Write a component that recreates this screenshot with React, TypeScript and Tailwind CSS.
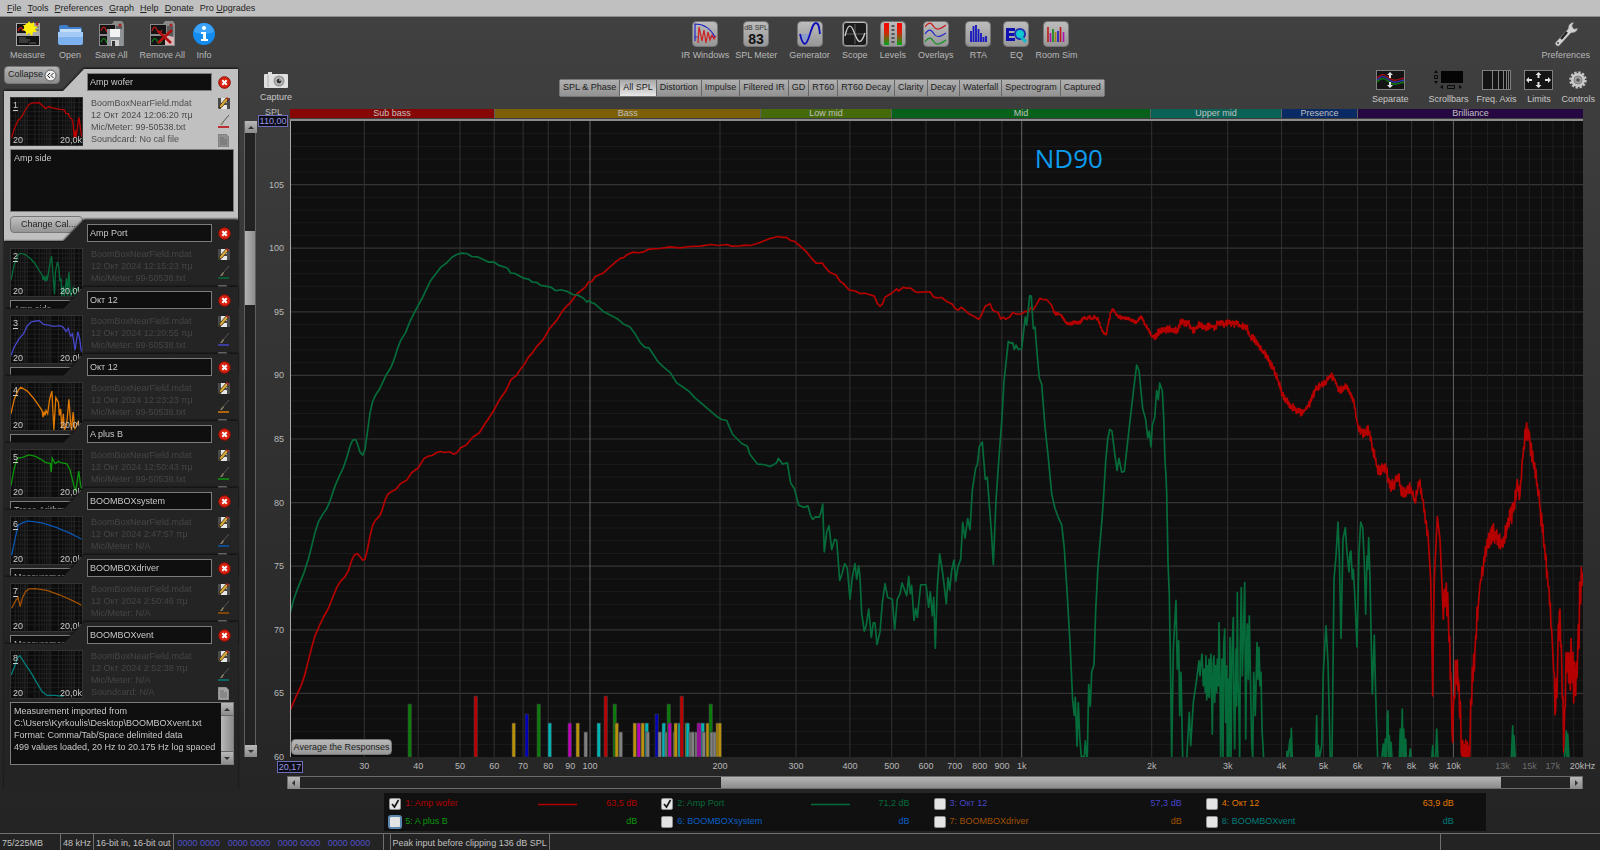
import { useState } from "react";
import type { ReactNode } from "react";

type Point = [number, number];

/* ---------- chart geometry ---------- */

const PLOT = { x: 290, y: 121, w: 1293, h: 637 };
const DECADE = 431.7;

const freqX = (hz: number) => 300 + DECADE * Math.log10(hz / 100);
const splY = (db: number) => ((110 - db) / 50) * PLOT.h;

const frequencyLabels = [
  { hz: 30, text: "30" },
  { hz: 40, text: "40" },
  { hz: 50, text: "50" },
  { hz: 60, text: "60" },
  { hz: 70, text: "70" },
  { hz: 80, text: "80" },
  { hz: 90, text: "90" },
  { hz: 100, text: "100" },
  { hz: 200, text: "200" },
  { hz: 300, text: "300" },
  { hz: 400, text: "400" },
  { hz: 500, text: "500" },
  { hz: 600, text: "600" },
  { hz: 700, text: "700" },
  { hz: 800, text: "800" },
  { hz: 900, text: "900" },
  { hz: 1000, text: "1k" },
  { hz: 2000, text: "2k" },
  { hz: 3000, text: "3k" },
  { hz: 4000, text: "4k" },
  { hz: 5000, text: "5k" },
  { hz: 6000, text: "6k" },
  { hz: 7000, text: "7k" },
  { hz: 8000, text: "8k" },
  { hz: 9000, text: "9k" },
  { hz: 10000, text: "10k" },
  { hz: 13000, text: "13k", dim: true },
  { hz: 15000, text: "15k", dim: true },
  { hz: 17000, text: "17k", dim: true },
  { hz: 19900, text: "20kHz" },
];

const faintFrequencies = [11000, 12000, 13000, 14000, 15000, 16000, 17000, 18000, 19000];

const bands = [
  { name: "Sub bass", size: 205, color: "bg-[#870606]" },
  { name: "Bass", size: 267, color: "bg-[#7d5f08]" },
  { name: "Low mid", size: 130, color: "bg-[#466a0a]" },
  { name: "Mid", size: 260, color: "bg-[#07611a]" },
  { name: "Upper mid", size: 130, color: "bg-[#0a6156]" },
  { name: "Presence", size: 76, color: "bg-[#0a2a63]" },
  { name: "Brilliance", size: 226, color: "bg-[#250842]" },
];

/* Each trace is stored as sections: origin, vertical step, jitter and points. */
interface Section {
  ox: number;
  oy: number;
  sy: number;
  jitter: number;
  data: string;
}

const LOW = { ox: 280, oy: 220, sy: 3 };
const MID = { ox: 740, oy: 200, sy: 2.75 };
const HIGH = { ox: 1150, oy: 280, sy: 3 };

const wooferTrace: Section[] = [
  {
    ...LOW,
    jitter: 0,
    data: "30,1475 50,1428 65,1395 75,1365 85,1325 95,1285 105,1250 117,1222 130,1195 145,1168 158,1135 170,1105 180,1088 195,1072 205,1055 215,1023 223,1007 232,1003 240,1012 248,1023 255,1020 262,992 270,950 278,918 286,903 300,888 307,870 315,843 323,825 332,818 347,810 362,792 380,782 395,760 415,745 433,716 445,710 457,708 470,699 480,696 495,699 508,697 522,704 530,700 542,685 558,677 578,653 598,640 615,613 640,575 657,543 678,513 693,480 710,467 722,448 733,434 745,413 757,400 768,383 790,359 810,325 830,302 847,275 860,259 872,248 890,223 915,203 926,187 935,186 946,170 970,160 985,146 1010,124 1022,115 1030,114 1042,104 1060,97 1077,99 1092,96 1107,88 1140,86 1170,81 1200,84 1230,80 1260,79 1293,74 1315,77 1340,74 1355,79 1380,78 1395,76 1412,77 1440,68 1470,56",
  },
  {
    ...MID,
    jitter: 0,
    data: "115,101 125,103 140,103 150,111 165,115 175,123 198,142 213,159 228,174 247,174 254,184 270,200 288,207 300,224 310,230 327,248 345,251 360,258 375,257 403,265 412,285 420,293 427,287 435,268 455,257 470,245 475,251 490,241 500,243 512,243 525,253 535,255 545,254 570,253 580,267 592,270 605,269 620,280 637,287 643,297 655,304 663,296 675,304 685,313 700,320 716,329 722,322 735,294 750,286 758,304 775,311 782,328 790,323 797,329 810,322 818,310 830,315 845,314 857,306 865,309 872,297 880,303 890,287 900,271 910,275 920,275 935,290",
  },
  {
    ...MID,
    jitter: 5,
    data: "943,312 957,315 965,318 975,335 987,343 1000,338 1020,339 1030,325 1040,328 1047,320 1055,328 1065,322 1075,330 1080,345 1087,362 1098,372 1105,342 1112,310 1118,300 1130,318 1145,325 1160,325 1175,332 1190,338 1200,325 1205,322 1215,345 1225,355 1235,376 1247,381 1255,366 1270,357 1288,355",
  },
  {
    ...HIGH,
    jitter: 11,
    data: "12,170 30,155 45,150 60,147 75,153 85,148 93,122 105,130 115,130 125,148 135,150 145,136 165,142 185,140 195,142 207,126 220,135 235,125 245,133 260,130 270,138 290,142 300,170 315,180 330,205 350,228 370,268 385,305 397,345 410,365 425,382 440,392 455,400 465,390 480,373 497,328 510,317 520,316 530,303 543,289 555,300 567,335 580,325 590,317 600,345 612,365 620,420",
  },
  {
    ...HIGH,
    jitter: 20,
    data: "627,455 640,455 655,457 665,490 680,560 688,580 697,565 707,558 715,605 725,620 735,608 745,592 752,630 760,645 775,620 785,638 795,670 803,630 808,610 818,660 827,730 835,780",
  },
  { ...HIGH, jitter: 0, data: "842,900 845,1060 848,1250 850,1080 853,900 862,712 870,780 876,915 880,1020" },
  {
    ...HIGH,
    jitter: 55,
    data: "883,930 887,940 895,1010 902,1180 908,1390 912,1250 918,1150 925,1200 932,1320 936,1430 943,1450 950,1420 958,1450 963,1260 975,1110 984,990",
  },
  {
    ...HIGH,
    jitter: 30,
    data: "990,915 1000,870 1010,800 1020,770 1032,760 1045,778 1060,795 1075,725 1088,700 1100,620 1110,645 1117,540 1128,450 1140,490 1150,550 1165,640 1180,770 1195,920 1205,1050",
  },
  {
    ...HIGH,
    jitter: 90,
    data: "1211,1180 1217,1290 1223,1140 1228,1000 1235,1150 1242,1370 1250,1150 1257,1190 1265,1150 1275,1240 1283,1120 1290,960 1298,880",
  },
];

const portTrace: Section[] = [
  {
    ...LOW,
    jitter: 0,
    data: "30,1183 40,1145 50,1115 60,1090 72,1060 85,1020 95,980 105,940 115,908 128,885 140,868 150,845 165,800 178,770 190,745 200,715 210,680 218,662 227,660 233,675 240,698 248,707 255,690 262,640 270,580 278,545 286,528 298,510 318,467 333,443 343,418 353,385 362,362 377,338 390,305 405,275 425,238 452,182 483,142 500,129 515,113 530,104 545,100 560,101 575,110 592,111 610,119 625,127 640,126 655,136 682,145 692,160 705,161 730,175 745,178 757,187 770,188 782,197 812,202 827,213 842,210 862,215 880,225 890,225 910,235 920,247 928,242 935,249 943,251 970,275 1012,297 1030,313 1050,322 1065,342 1080,368 1095,383 1107,385 1133,425 1150,442 1170,458 1190,490 1210,503 1228,516 1245,535 1270,556 1312,592 1325,600 1340,603 1348,622 1358,645 1385,672 1402,680 1410,705 1433,734 1455,736 1470,741 1480,736 1490,730",
  },
  {
    ...MID,
    jitter: 0,
    data: "115,712 128,728 142,724 152,780 163,795 176,841 192,847 204,843 212,870 218,880 226,873 238,874 243,860 248,838 253,970 260,915 267,898 275,963 284,935 290,938 299,1048 306,1030 314,1002 322,1015 330,1100 337,1040 345,1002 350,1045 356,1008 360,1040 365,1140 373,1188 378,1175 386,1127 394,1205 400,1165 405,1165 411,1225 420,1190 427,1110 435,1057 443,1095 457,1100 464,1183 472,1100 480,1085 486,1055 500,1090 506,1037 511,1085 515,1062 522,1158 527,1125 532,1150 542,1060 558,1060 566,1122 571,1080 577,1145 581,1095 586,1235 592,1065 599,975 609,1035 619,1113 624,1040 629,1075 635,1020 642,992 647,1050 654,1010 662,990 668,888 675,932 683,878 690,908 697,800 707,738 712,730 718,680 727,667 736,770 742,764 748,840 754,910 760,1005 768,830 776,720 785,610 792,500 805,390 813,395 818,393 823,412 828,400 835,412 845,410 856,322 860,345 869,264 874,265 880,355 885,350 892,430 898,490 905,508 915,625 925,710 935,810 945,850 955,875 965,895 973,960 982,1090 990,1220 998,1380 1003,1420 1006,1370 1011,1505 1015,1385 1019,1480 1024,1533 1033,1533 1036,1490 1040,1533 1042,1533 1046,1335 1051,1395 1055,1300 1062,1280 1067,1130 1074,1010 1086,880 1090,830 1097,720 1103,660 1109,632 1116,637 1123,690 1131,745 1137,712 1145,750 1153,748 1160,690 1168,625 1180,530 1190,455 1197,470 1208,575 1217,605 1223,655 1228,637 1233,680 1237,620 1244,600 1250,525 1255,550 1259,505 1267,525 1271,600 1275,720 1278,760",
  },
  {
    ...HIGH,
    jitter: 0,
    data: "50,640 54,850 58,945 62,1200 65,1440 70,1110 78,963 82,1170 86,1085 89,1310 93,1180 98,1440 110,1440 118,1300 122,1400 130,1270 140,1200 147,1145 150,1190 153,1150 156,1125 160,1220 163,1170 166,1240 168,1130 170,1262 173,1160 175,1250 177,1140 178,1255 181,1190 183,1125 187,1365 190,1150 192,1130 194,1270 197,1160 200,1240 202,1140 205,1220 207,1030 210,1200 212,1440 216,1140 219,1440 221,1100 224,1050 227,1330 230,1160 232,1440 235,1200 237,1440 240,1075 243,1440 246,1120 250,1015 252,1300 254,1410 258,1110 260,1280 262,940 264,1210 266,1250 269,1440 271,1100 274,925 277,1190 280,1080 284,910 287,1380 290,1100 292,1035 295,1200 298,1010 302,1240 305,1390 308,1440 311,1180 314,1250 316,1310 321,1090 324,1200 327,1105 330,1220 333,1180 336,1350 341,1440 410,1440 411,1417 413,1440 420,1380 422,1440 424,1348 427,1440 497,1440 500,1310 502,1440 505,1400 508,1440 515,1400 520,1180 528,1040 534,1150 541,1440 546,1440 552,900 558,830 564,728 568,830 573,1078 579,780 586,745 591,820 594,850 597,878 600,820 603,815 607,900 610,870 615,960 621,1103 627,820 632,728 638,745 643,850 647,1005 651,830 653,870 656,775 660,900 667,1245 673,1068 677,1250 683,1440 695,1440 700,1395 703,1440 706,1380 709,1440 712,1310 714,1295 716,1440 718,1370 721,1440 723,1390 726,1440 748,1440 751,1350 753,1440 757,1290 759,1440 761,1350 764,1440 767,1380 769,1440 778,1440 781,1410 784,1440 845,1440 848,1400 851,1440 857,1440 860,1350 864,1440 1084,1440 1088,1340 1090,1440 1092,1370 1096,1440 1243,1440 1247,1400 1249,1355 1251,1440 1253,1365 1257,1440",
  },
];

// small repeatable hash, so the ripple is the same on every draw
const hash = (n: number) => {
  const s = Math.sin(n * 127.1 + 11.7) * 43758.5453;
  return s - Math.floor(s);
};

function tracePoints(sections: Section[]) {
  const out: string[] = [];
  let side = 1;
  sections.forEach(({ ox, oy, sy, jitter, data }) => {
    const pts = data.split(" ").map((p) => p.split(",").map(Number) as Point);
    const place = (x: number, y: number) =>
      out.push(`${(ox + x / 3 - PLOT.x).toFixed(1)},${(oy + y / sy - PLOT.y).toFixed(1)}`);
    pts.forEach(([x, y], i) => {
      place(x, y);
      const next = pts[i + 1];
      if (!jitter || !next) return;
      for (let px = x + 2; px < next[0]; px += 2) {
        const t = (px - x) / (next[0] - x);
        side = -side;
        place(px, y + (next[1] - y) * t + side * (0.1 + 0.9 * hash(px)) * jitter);
      }
    });
  });
  return out.join(" ");
}

const modeColors = {
  red: { fill: "#b80000", top: 576 },
  green: { fill: "#0b7d0b", top: 584 },
  blue: { fill: "#0000b4", top: 594 },
  yellow: { fill: "#b8900a", top: 603 },
  cyan: { fill: "#00b4b4", top: 603 },
  magenta: { fill: "#b800b8", top: 603 },
  grey: { fill: "#808080", top: 612 },
};

const roomModes: [keyof typeof modeColors, number][] = [
  ["green", 120], ["red", 186], ["yellow", 224], ["blue", 237], ["green", 249], ["cyan", 260],
  ["magenta", 280], ["yellow", 288], ["grey", 296], ["cyan", 309], ["red", 316], ["green", 325],
  ["yellow", 327], ["grey", 331], ["yellow", 345], ["magenta", 349], ["yellow", 353],
  ["cyan", 357], ["grey", 358], ["blue", 367], ["grey", 370], ["cyan", 374], ["grey", 377],
  ["green", 379], ["magenta", 380], ["grey", 385], ["yellow", 386], ["cyan", 390], ["red", 392],
  ["yellow", 397], ["cyan", 398], ["grey", 401], ["grey", 403], ["grey", 407], ["magenta", 409],
  ["magenta", 411], ["cyan", 413], ["grey", 414], ["yellow", 418], ["green", 421], ["grey", 422],
  ["grey", 425], ["yellow", 428], ["yellow", 430],
];

/* ---------- measurements ---------- */

interface Measurement {
  id: number;
  name: string;
  time: string;
  mic: string;
  notes: string;
  color: string;
  curve: string;
}

const measurements: Measurement[] = [
  {
    id: 1, name: "Amp wofer", time: "12 Окт 2024 12:06:20 πμ", mic: "99-50538.txt", notes: "Amp side", color: "#b80000",
    curve: "2,122 10,95 22,68 32,60 42,40 55,20 65,16 85,14 95,22 105,32 115,27 130,31 150,35 162,36 168,48 175,48 180,60 186,65 190,80 193,122 197,100 199,122 205,75 208,60 213,100 216,120",
  },
  {
    id: 2, name: "Amp Port", time: "12 Окт 2024 12:15:23 πμ", mic: "99-50538.txt", notes: "Amp side", color: "#066b3a",
    curve: "0,95 10,48 22,18 30,13 45,18 60,30 75,47 85,65 95,80 98,95 101,85 105,100 108,82 110,98 115,70 120,40 124,22 127,60 133,140 136,70 142,40 146,55 150,100 153,90 155,145 160,115 163,145 170,90 173,145 177,70 182,145 190,120 195,145 205,118 208,145",
  },
  {
    id: 3, name: "Окт 12", time: "12 Окт 2024 12:20:55 πμ", mic: "99-50538.txt", notes: "", color: "#4646c8",
    curve: "0,122 10,95 25,70 38,55 50,30 62,18 85,14 100,26 115,28 130,32 150,30 160,35 168,48 175,38 182,62 188,55 196,105 204,48 210,70 215,110",
  },
  {
    id: 4, name: "Окт 12", time: "12 Окт 2024 12:23:23 πμ", mic: "99-50538.txt", notes: "", color: "#e07800",
    curve: "0,95 10,50 22,22 30,13 50,25 70,48 85,70 95,85 98,105 101,88 104,100 107,85 112,95 118,50 125,25 131,145 137,45 145,60 148,100 152,80 155,140 160,95 163,145 170,130 177,50 182,120 185,145 190,90 195,145 205,120 210,145",
  },
  {
    id: 5, name: "A plus B", time: "12 Окт 2024 12:50:43 πμ", mic: "99-50538.txt", notes: "Trace Arithmetic", color: "#0b960b",
    curve: "0,110 10,55 20,25 35,23 55,15 75,20 90,28 105,38 120,42 123,68 126,25 135,42 145,35 155,40 170,42 180,60 185,80 192,110 198,125 207,65 213,110 216,120",
  },
  {
    id: 6, name: "BOOMBOXsystem", time: "12 Окт 2024 2:47:57 πμ", mic: "N/A", notes: "Measurement", color: "#0a55b0",
    curve: "2,118 12,70 22,25 35,18 50,13 70,14 100,20 140,33 180,50 215,68",
  },
  {
    id: 7, name: "BOOMBOXdriver", time: "12 Окт 2024 2:50:46 πμ", mic: "N/A", notes: "Measurement", color: "#a05000",
    curve: "2,75 15,50 22,42 28,70 35,42 45,22 55,15 75,14 110,20 150,34 190,52 215,65",
  },
  {
    id: 8, name: "BOOMBOXvent", time: "12 Окт 2024 2:52:38 πμ", mic: "N/A",
    notes: "Measurement imported from\nC:\\Users\\Kyrkoulis\\Desktop\\BOOMBOXvent.txt\nFormat: Comma/Tab/Space delimited data\n499 values loaded, 20 Hz to 20.175 Hz log spaced",
    color: "#007d78",
    curve: "0,75 10,50 20,22 27,14 40,35 60,65 80,100 95,125 110,137 135,137 160,140",
  },
];

const legend = [
  { id: 1, label: "1: Amp wofer", value: "63,5 dB", checked: true, text: "text-[#b00000]", line: "#b00000" },
  { id: 2, label: "2: Amp Port", value: "71,2 dB", checked: true, text: "text-[#066b3a]", line: "#066b3a" },
  { id: 3, label: "3: Окт 12", value: "57,3 dB", checked: false, text: "text-[#4646c8]" },
  { id: 4, label: "4: Окт 12", value: "63,9 dB", checked: false, text: "text-[#e07800]" },
  { id: 5, label: "5: A plus B", value: "dB", checked: false, text: "text-[#0b960b]", focus: true },
  { id: 6, label: "6: BOOMBOXsystem", value: "dB", checked: false, text: "text-[#0a5fc4]" },
  { id: 7, label: "7: BOOMBOXdriver", value: "dB", checked: false, text: "text-[#a05000]" },
  { id: 8, label: "8: BOOMBOXvent", value: "dB", checked: false, text: "text-[#007d78]" },
];

const graphTabs = [
  "SPL & Phase", "All SPL", "Distortion", "Impulse", "Filtered IR", "GD", "RT60",
  "RT60 Decay", "Clarity", "Decay", "Waterfall", "Spectrogram", "Captured",
];

const menus = [
  ["", "F", "ile"],
  ["", "T", "ools"],
  ["", "P", "references"],
  ["", "G", "raph"],
  ["", "H", "elp"],
  ["", "D", "onate"],
  ["Pro ", "U", "pgrades"],
];

/* ---------- icons ---------- */

function FilesIcon({ children }: { children?: ReactNode }) {
  return (
    <svg width="26" height="26" viewBox="0 0 26 26">
      <path d="M1 3h13l2-3h8l2 3v22H1z" fill="#8a8a8a" />
      <path d="M2 4h15v9H2zM2 15h15v9H2z" fill="#141414" />
      <path d="M3 10c2-6 4-4 5-1s3 4 5 0" fill="none" stroke="#c01818" strokeWidth="1.2" />
      <path d="M3 21c2-5 4-4 5-1s3 3 5 0" fill="none" stroke="#108a20" strokeWidth="1.2" />
      <path d="M18 5h6v19h-6z" fill="#5a5a5a" />
      <circle cx="22" cy="4" r="1.5" fill="#b02020" />
      {children}
    </svg>
  );
}

const MeasureIcon = () => (
  <svg width="26" height="26" viewBox="0 0 26 26">
    <path d="M1 2h24v23H1z" fill="#a8a8a8" />
    <path d="M2 3h15v9H2zM2 15h22v9H2z" fill="#141414" />
    <path d="M3 10c2-5 4-4 5 0" fill="none" stroke="#c01818" strokeWidth="1.2" />
    <path d="M4 17h7M4 19h11M4 21h9M14 22h7" stroke="#777" strokeWidth="0.8" />
    <path d="M19 6h5M19 9h5" stroke="#555" />
    <circle cx="22" cy="3" r="1.5" fill="#b02020" />
    <path d="M14 0l2 3 3-2 0 4 4 1-3 2 2 3-4 0-1 4-3-3-3 2 0-4-4-1 3-2-2-3 4 0z" fill="#fff000" />
    <circle cx="14" cy="7" r="5" fill="#ffee10" />
  </svg>
);

const OpenIcon = () => (
  <svg width="26" height="26" viewBox="0 0 26 26">
    <path d="M2 6q0-2 2-2h6l2 2h11q2 0 2 2v5H2z" fill="#3f7ecb" />
    <path d="M3 8h21v5H3z" fill="#c3dcf8" />
    <path d="M1 11h25v11q0 2-2 2H3q-2 0-2-2z" fill="#7db1ee" />
    <path d="M1 11h25v5H1z" fill="#a3caf7" />
  </svg>
);

const SaveAllIcon = () => (
  <FilesIcon>
    <path d="M9 8h15l1 1v16H9z" fill="#8f9296" />
    <path d="M12 8h10v8H12z" fill="#f2f2f2" />
    <path d="M13 19h8v6h-8z" fill="#d0d0d0" />
    <path d="M14 20h3v5h-3z" fill="#333" />
  </FilesIcon>
);

const RemoveAllIcon = () => (
  <FilesIcon>
    <path d="M16 14l9 2v8h-9z" fill="#d8b8b8" />
    <path d="M9 10l13 12M23 9L9 22" stroke="#b01010" strokeWidth="2.6" />
  </FilesIcon>
);

const InfoIcon = () => (
  <svg width="26" height="26" viewBox="0 0 26 26">
    <circle cx="13" cy="13" r="11" fill="#148cf0" />
    <path d="M3 11a10 9 0 0 1 20 0q-10 4-20 0" fill="#3ba2f7" />
    <circle cx="13" cy="7" r="2" fill="#fff" />
    <path d="M10 11h5v7h2v2h-7v-2h2v-5h-2z" fill="#fff" />
  </svg>
);

function Tile({ dark, children }: { dark?: boolean; children: ReactNode }) {
  return (
    <svg width="26" height="26" viewBox="0 0 26 26">
      <defs>
        <linearGradient id="tile" x1="0" y1="0" x2="0" y2="1">
          <stop offset="0" stopColor="#bdbdbd" />
          <stop offset="1" stopColor="#969696" />
        </linearGradient>
      </defs>
      <rect x="0.5" y="0.5" width="25" height="25" rx="4" fill="url(#tile)" stroke="#777" />
      {dark && <rect x="2" y="2" width="22" height="22" rx="2" fill="#1c1c1c" />}
      {children}
    </svg>
  );
}

const IrWindowsIcon = () => (
  <Tile>
    <path d="M3 20V3q13 0 20 13" fill="none" stroke="#2424c8" strokeWidth="1.2" />
    <path d="M3 16h3M18 16h5" stroke="#2424c8" strokeWidth="0.8" />
    <path d="M6 22l1-16 3 14 2-11 2 13 2-11 2 8 2-5 2 4 2-3" fill="none" stroke="#d02020" strokeWidth="1.2" />
  </Tile>
);

const SplMeterIcon = () => (
  <Tile>
    <text x="13" y="9" textAnchor="middle" fontSize="7" fontFamily="Liberation Sans, sans-serif" fill="#333">dB SPL</text>
    <text x="13" y="23" textAnchor="middle" fontSize="14" fontWeight="bold" fontFamily="Liberation Sans, sans-serif" fill="#111">83</text>
  </Tile>
);

const GeneratorIcon = () => (
  <Tile>
    <path d="M3 13h11q-3 9-5 9t-6-9" fill="#8c9cc8" />
    <path d="M3 13C6 26 9 25 12 16s4-14 7-14 3 4 4 11" fill="none" stroke="#1010b8" strokeWidth="1.8" />
  </Tile>
);

const ScopeIcon = () => (
  <Tile dark>
    <path d="M3 13h20M13 3v20" stroke="#606060" />
    <path d="M3 15C6 2 9 3 12 11s6 16 11 1" fill="none" stroke="#c8c8c8" strokeWidth="1.4" />
  </Tile>
);

const LevelsIcon = () => (
  <Tile>
    <defs>
      <linearGradient id="level" x1="0" y1="0" x2="0" y2="1">
        <stop offset="0" stopColor="#ff0000" />
        <stop offset="0.45" stopColor="#d02808" />
        <stop offset="1" stopColor="#00a818" />
      </linearGradient>
    </defs>
    <path d="M4 2h5v22H4zM17 2h5v22h-5z" fill="url(#level)" />
    <path d="M13 4v20" stroke="#555" strokeWidth="3" strokeDasharray="2 2" />
  </Tile>
);

const OverlaysIcon = () => (
  <Tile>
    <path d="M2 6c5-7 7-3 9 0s5 3 12-2" fill="none" stroke="#c82020" strokeWidth="1.2" />
    <path d="M2 13c5-7 7-3 9 0s5 4 12-1" fill="none" stroke="#2828c8" strokeWidth="1.2" />
    <path d="M2 21c5-7 7-3 9 0s5 3 12-2" fill="none" stroke="#189020" strokeWidth="1.2" />
  </Tile>
);

const RtaIcon = () => (
  <Tile>
    <path d="M6 21V10M8.500 21V5M11 21V4M13.500 21V8M16 21v-9M18.500 21v-5M21 21v-6" stroke="#1414c0" strokeWidth="1.8" />
  </Tile>
);

const EqIcon = () => (
  <Tile>
    <path d="M3 7h9v3H6v2h5v3H6v2h6v3H3z" fill="#1010b0" />
    <circle cx="17" cy="13" r="5" fill="#10c8d0" stroke="#2030b0" strokeWidth="2" />
    <path d="M18 16l5 5" stroke="#10b8c8" strokeWidth="3" />
  </Tile>
);

const RoomSimIcon = () => (
  <Tile>
    <path d="M5 21V6" stroke="#c01818" strokeWidth="1.6" />
    <path d="M7.500 21V12M20.500 21V11" stroke="#b010b0" strokeWidth="1.6" />
    <path d="M10 21V8" stroke="#108818" strokeWidth="1.6" />
    <path d="M12.500 21V11" stroke="#a08010" strokeWidth="1.6" />
    <path d="M15 21V10" stroke="#1818c0" strokeWidth="1.6" />
    <path d="M17.500 21V6" stroke="#c01818" strokeWidth="1.6" />
  </Tile>
);

const WrenchIcon = () => (
  <svg width="26" height="26" viewBox="0 0 26 26">
    <path d="M2 22L15 8q0-6 6-7l-2 4 2 3 4-1q-1 5-7 5L6 25q-3 1-4-3z" fill="#d0d0d0" stroke="#555" strokeWidth="0.6" />
    <path d="M8 18l6-7" stroke="#222" strokeWidth="2.4" />
    <circle cx="5" cy="22" r="1" fill="#444" />
  </svg>
);

const CameraIcon = () => (
  <svg width="24" height="17" viewBox="0 0 24 17">
    <path d="M4 0h4v2H4z" fill="#ddd" />
    <rect x="0" y="2" width="24" height="14" rx="1" fill="#e0e0e0" />
    <path d="M4 3v12" stroke="#b0b0b0" />
    <circle cx="15" cy="9" r="5.500" fill="#989898" />
    <circle cx="15" cy="9" r="3.500" fill="#d8d8d8" />
    <circle cx="15" cy="9" r="2.500" fill="#333" />
    <circle cx="16" cy="8" r="0.800" fill="#fff" />
  </svg>
);

const SeparateIcon = () => (
  <svg width="29" height="20" viewBox="0 0 29 20">
    <rect x="0.500" y="0.500" width="28" height="19" fill="#141414" stroke="#808080" />
    <path d="M1 8c5-5 7-4 12 0s8 2 15 0" fill="none" stroke="#a01010" strokeWidth="1.400" />
    <path d="M1 10c5-5 7-4 12 0s8 2 15 0" fill="none" stroke="#3434b0" strokeWidth="1.400" />
    <path d="M1 12c5-5 7-4 12 0s8 2 15 0" fill="none" stroke="#108010" strokeWidth="1.400" />
    <path d="M14 2l3 3h-2v3h-2V5h-2zM14 18l3-3h-2v-3h-2v3h-2z" fill="#e0e0e0" />
  </svg>
);

const ScrollbarsIcon = () => (
  <svg width="30" height="20" viewBox="0 0 30 20">
    <path d="M8 1h22v12H8z" fill="#050505" />
    <path d="M3 0l2 3H1zM3 14l2-3H1zM7 17l3-2v4zM29 17l-3-2v4z" fill="#0a0a0a" />
    <path d="M1.500 5.500h3v3h-3zM14.500 15.500h7v3h-7z" fill="none" stroke="#0a0a0a" />
  </svg>
);

const FreqAxisIcon = () => (
  <svg width="29" height="20" viewBox="0 0 29 20">
    <rect x="0.500" y="0.500" width="28" height="19" fill="#141414" stroke="#808080" />
    <path d="M10.500 1v18M16.500 1v18M21.500 1v18M24.500 1v18M26.500 1v18" stroke="#808080" />
  </svg>
);

const LimitsIcon = () => (
  <svg width="29" height="20" viewBox="0 0 29 20">
    <rect x="0.500" y="0.500" width="28" height="19" fill="#141414" stroke="#808080" />
    <path d="M14.500 2l3 3h-2v3h-2V5h-2zM14.500 18l3-3h-2v-3h-2v3h-2zM2 10l3-3v2h3v2H5v2zM27 10l-3-3v2h-3v2h3v2z" fill="#e0e0e0" />
  </svg>
);

const GearIcon = () => (
  <svg width="20" height="20" viewBox="0 0 20 20">
    <circle cx="10" cy="10" r="7.500" fill="none" stroke="#c4c4c4" strokeWidth="2.500" strokeDasharray="2.300 1.630" />
    <circle cx="10" cy="10" r="7" fill="#c8c8c8" />
    <circle cx="10" cy="10" r="4" fill="#a0a0a0" stroke="#808080" />
    <circle cx="10" cy="10" r="1.800" fill="#505050" />
  </svg>
);

const DeleteIcon = () => (
  <svg width="13" height="13" viewBox="0 0 13 13">
    <circle cx="6.500" cy="6.500" r="5.800" fill="#d82010" stroke="#8c1008" />
    <path d="M4.300 4.300l4.400 4.400M8.700 4.300L4.300 8.700" stroke="#fff" strokeWidth="2" />
  </svg>
);

const SaveIcon = () => (
  <svg width="12" height="12" viewBox="0 0 12 12">
    <path d="M0 1h12v11H1l-1-1z" fill="#4a4a4a" />
    <path d="M3 1h6v5H3zM3 8h6v4H3z" fill="#e6e6e6" />
    <path d="M1 11l1-3 6-7 2 2-6 7z" fill="#d8a838" stroke="#2c2008" strokeWidth="0.700" />
    <path d="M8 1l1-1 2 2-1 1z" fill="#c82020" />
  </svg>
);

const BrushIcon = ({ color }: { color: string }) => (
  <svg width="12" height="13" viewBox="0 0 12 13">
    <path d="M11 0L5 7" stroke="#555" />
    <path d="M5 6l1 1-2 3H2z" fill="#8a8268" />
    <path d="M0 12h11" stroke={color} strokeWidth="1.400" />
  </svg>
);

const NotesIcon = ({ dim }: { dim: boolean }) => (
  <svg width="11" height="13" viewBox="0 0 11 13">
    <path d="M0 0h8l3 3v10H0z" fill={dim ? "#8f8f8f" : "#a0a0a0"} stroke="#666" strokeWidth="0.500" />
    <path d="M2 4h4M2 6h7M2 8h7M2 10h7" stroke="#666" strokeWidth="0.800" />
  </svg>
);

const arrows = {
  up: "M0 5l3-3 3 3z",
  down: "M0 2l3 3 3-3z",
  left: "M4 0v6L1 3z",
  right: "M2 0v6l3-3z",
};

function ArrowButton({ dir }: { dir: keyof typeof arrows }) {
  return (
    <button
      aria-label={`Scroll ${dir}`}
      className="flex size-3 shrink-0 items-center justify-center bg-linear-to-b from-[#b8b8b8] to-[#8c8c8c]"
    >
      <svg width="6" height="6" viewBox="0 0 6 6">
        <path d={arrows[dir]} fill="#333" />
      </svg>
    </button>
  );
}

/* ---------- pieces ---------- */

function ToolButton({ icon, label }: { icon: ReactNode; label: string }) {
  return (
    <button className="flex shrink-0 flex-col items-center gap-0.5 text-[9px] leading-3 whitespace-nowrap text-[#b8b8b8]">
      {icon}
      {label}
    </button>
  );
}

function MenuBar() {
  return (
    <nav className="flex h-[17px] items-center gap-1.5 border-b border-[#8a8a90] bg-[#c0c0c0] pt-px pl-[7px] text-[9px] text-[#222]">
      {menus.map(([before, key, after]) => (
        <button key={key + after} className="whitespace-pre">
          {before}
          <span className="underline">{key}</span>
          {after}
        </button>
      ))}
    </nav>
  );
}

function MainToolbar() {
  return (
    <header className="flex h-[49px] items-start pt-1 pr-2.5 pl-2.5">
      <div className="flex gap-3">
        <ToolButton icon={<MeasureIcon />} label="Measure" />
        <ToolButton icon={<OpenIcon />} label="Open" />
        <ToolButton icon={<SaveAllIcon />} label="Save All" />
        <div className="flex gap-1.5">
          <ToolButton icon={<RemoveAllIcon />} label="Remove All" />
          <ToolButton icon={<InfoIcon />} label="Info" />
        </div>
      </div>
      <div className="flex flex-1 justify-center gap-1.5">
        <ToolButton icon={<IrWindowsIcon />} label="IR Windows" />
        <ToolButton icon={<SplMeterIcon />} label="SPL Meter" />
        <div className="mx-1.5 flex gap-3">
          <ToolButton icon={<GeneratorIcon />} label="Generator" />
          <ToolButton icon={<ScopeIcon />} label="Scope" />
          <ToolButton icon={<LevelsIcon />} label="Levels" />
          <ToolButton icon={<OverlaysIcon />} label="Overlays" />
          <ToolButton icon={<RtaIcon />} label="RTA" />
        </div>
        <ToolButton icon={<EqIcon />} label="EQ" />
        <ToolButton icon={<RoomSimIcon />} label="Room Sim" />
      </div>
      <ToolButton icon={<WrenchIcon />} label="Preferences" />
    </header>
  );
}

function Thumbnail({ m }: { m: Measurement }) {
  return (
    <div className="relative h-[49px] w-[73px] shrink-0 border border-[#333] bg-[#0c0c0c] text-[9px] leading-[10px] text-[#c8c8c8]">
      <svg className="absolute inset-0 h-full w-full" viewBox="0 0 217 145" preserveAspectRatio="none">
        {[14, 28, 42, 56, 70, 84, 98, 112, 126].map((y) => (
          <path key={y} d={`M0 ${y}h217`} stroke="#262626" strokeWidth="2" />
        ))}
        {[13, 22, 29, 36, 41, 45, 50, 73, 86, 95, 102, 108, 113, 118, 122, 145, 158, 167, 174, 180, 185, 190, 194, 208].map((x) => (
          <path key={x} d={`M${x} 0v145`} stroke="#2c2c2c" strokeWidth="2" />
        ))}
        <polyline points={m.curve} fill="none" stroke={m.color} strokeWidth="4" />
      </svg>
      <span className="absolute top-0.5 left-0.5 underline underline-offset-2">{m.id}</span>
      <span className="absolute bottom-0 left-0.5">20</span>
      <span className="absolute right-0 bottom-0">20,0k</span>
    </div>
  );
}

function MeasurementCard({ m, selected, last }: { m: Measurement; selected?: boolean; last?: boolean }) {
  const surface = selected
    ? "h-[172px] bg-[#c0c0c0] text-[#4c4c4c]"
    : last
      ? "h-[168px] bg-[#242424] text-[#454545]"
      : "h-[88px] bg-[#242424] text-[#454545]";

  return (
    <div className={`[filter:drop-shadow(0_-1px_1px_#0c0c0c)] ${selected ? "-mt-[15px]" : "-mt-[21px]"}`}>
      <article
        className={`flex flex-col overflow-hidden pr-1 pl-1.5 [clip-path:polygon(80px_0,100%_0,100%_100%,0_100%,0_22px,59px_22px)] ${surface}`}
      >
        <div className="flex shrink-0 items-center pt-1 pl-[77px]">
          <input
            aria-label={`Name of measurement ${m.id}`}
            defaultValue={m.name}
            className="h-[18px] w-[125px] border border-[#7c7c7c] bg-[#0f0f0f] px-0.5 text-[9px] text-[#c8c8c8] outline-none"
          />
          <button aria-label={`Remove ${m.name}`} className="ml-1.5">
            <DeleteIcon />
          </button>
        </div>
        <div className="mt-1 flex shrink-0 items-start">
          <div className="pt-0.5">
            <Thumbnail m={m} />
          </div>
          <div className="h-[54px] flex-1 pt-0.5 pl-2 text-[9px] leading-3 whitespace-nowrap">
            <p>BoomBoxNearField.mdat</p>
            <p>{m.time}</p>
            <p>Mic/Meter: {m.mic}</p>
            <p>Soundcard: {m.mic === "N/A" ? "N/A" : "No cal file"}</p>
          </div>
          <div className="flex w-4 flex-col items-start gap-1.5 pt-0.5">
            <button aria-label="Save"><SaveIcon /></button>
            <button aria-label="Trace colour"><BrushIcon color={m.color} /></button>
            <button aria-label="Notes"><NotesIcon dim={!!selected} /></button>
          </div>
        </div>
        <div className="flex h-[63px] shrink-0 border border-[#7c7c7c] bg-[#0f0f0f]">
          <textarea
            aria-label={`Notes of measurement ${m.id}`}
            defaultValue={m.notes}
            wrap="off"
            className="flex-1 resize-none overflow-hidden px-[3px] py-0.5 text-[9px] leading-3 text-[#c8c8c8] outline-none"
          />
          {last && (
            <div className="flex w-3 flex-col bg-[#9a9a9a]">
              <ArrowButton dir="up" />
              <div className="flex-1 border-y border-[#666] bg-linear-to-r from-[#b8b8b8] to-[#8c8c8c]" />
              <ArrowButton dir="down" />
            </div>
          )}
        </div>
        {selected && (
          <button className="mt-1 h-[17px] w-[73px] shrink-0 rounded-sm border border-[#777] bg-linear-to-b from-[#c0c0c0] to-[#949494] pl-1 text-[9px] text-[#222]">
            Change Cal...
          </button>
        )}
      </article>
    </div>
  );
}

function Sidebar() {
  return (
    <aside className="w-[238px] shrink-0 pl-1">
      <button className="relative z-10 flex h-[18px] w-[56px] items-center justify-between rounded-sm border border-[#777] bg-linear-to-b from-[#b4b4b4] to-[#8c8c8c] pr-0.5 pl-[3px] text-[9px] text-[#222]">
        Collapse
        <svg width="13" height="13" viewBox="0 0 13 13">
          <circle cx="6.500" cy="6.500" r="5.500" fill="#f0f0f0" stroke="#555" />
          <path d="M6 4L3.500 6.500 6 9M9.500 4L7 6.500 9.500 9" fill="none" stroke="#222" />
        </svg>
      </button>
      {measurements.map((m, i) => (
        <MeasurementCard key={m.id} m={m} selected={i === 0} last={i === measurements.length - 1} />
      ))}
    </aside>
  );
}

function GraphToolbar() {
  const [active, setActive] = useState("All SPL");

  return (
    <div className="flex h-[43px] items-start pl-1">
      <button className="mt-1.5 flex flex-col items-center gap-0.5 text-[9px] leading-3 text-[#c8c8c8]">
        <CameraIcon />
        Capture
      </button>
      <div className="flex flex-1 justify-center pt-[13px]">
        <div role="tablist" className="flex h-[18px] rounded-xs border border-[#777]">
          {graphTabs.map((tab) => (
            <button
              key={tab}
              role="tab"
              aria-selected={active === tab}
              onClick={() => setActive(tab)}
              className={`border-r border-[#666] px-[3px] text-[9px] whitespace-nowrap text-[#1c1c1c] last:border-r-0 ${
                active === tab
                  ? "bg-linear-to-b from-[#a8a8a8] to-[#e8e8e8]"
                  : "bg-linear-to-b from-[#b0b0b0] to-[#929292]"
              }`}
            >
              {tab}
            </button>
          ))}
        </div>
      </div>
      <div className="flex gap-2 pt-1 pr-[5px] text-[9px] leading-3 whitespace-nowrap text-[#c8c8c8]">
        <button className="mr-3 flex flex-col items-center gap-[3px]"><SeparateIcon />Separate</button>
        <button className="flex flex-col items-center gap-[3px]"><ScrollbarsIcon />Scrollbars</button>
        <button className="flex flex-col items-center gap-[3px]"><FreqAxisIcon />Freq. Axis</button>
        <button className="flex flex-col items-center gap-[3px]"><LimitsIcon />Limits</button>
        <button className="flex flex-col items-center gap-[3px]"><GearIcon />Controls</button>
      </div>
    </div>
  );
}

function Plot() {
  const decibels = Array.from({ length: 49 }, (_, i) => 109 - i);

  return (
    <div className="relative min-h-[400px] flex-1 bg-[#0f0f0f]">
      <svg
        className="absolute inset-0 h-full w-full"
        viewBox={`0 0 ${PLOT.w} ${PLOT.h}`}
        preserveAspectRatio="none"
      >
        {decibels.map((db) => (
          <path
            key={db}
            d={`M0 ${splY(db).toFixed(1)}H${PLOT.w}`}
            stroke={db % 5 === 0 ? "#343434" : "#1b1b1b"}
            strokeWidth={db % 5 === 0 ? 1.2 : 1}
          />
        ))}
        {faintFrequencies.map((hz) => (
          <path key={hz} d={`M${freqX(hz).toFixed(1)} 0V${PLOT.h}`} stroke="#202020" />
        ))}
        {frequencyLabels
          .filter((f) => !f.dim && f.hz < 19000)
          .map(({ hz }) => (
            <path
              key={hz}
              d={`M${freqX(hz).toFixed(1)} 0V${PLOT.h}`}
              stroke={hz === 100 || hz === 1000 || hz === 10000 ? "#646464" : "#323232"}
            />
          ))}
        {roomModes.map(([kind, x]) => (
          <rect
            key={kind + x}
            x={x - 2}
            y={modeColors[kind].top}
            width="3.500"
            height={PLOT.h - modeColors[kind].top}
            fill={modeColors[kind].fill}
            stroke="#3c3c3c"
            strokeWidth="0.600"
          />
        ))}
        <polyline points={tracePoints(wooferTrace)} fill="none" stroke="#b40000" strokeWidth="1.700" strokeLinejoin="round" />
        <polyline points={tracePoints(portTrace)} fill="none" stroke="#066b3a" strokeWidth="1.700" strokeLinejoin="round" />
        <path d={`M0.500 0V${PLOT.h}`} stroke="#a8a8a8" />
      </svg>
      <p className="absolute top-[3%] left-[57.600%] font-['Open_Sans',sans-serif] text-[26px] leading-9 text-[#0c9ced]">
        ND90
      </p>
      <button className="absolute bottom-0.5 left-px h-4 w-[101px] rounded-sm border border-[#777] bg-linear-to-b from-[#b8b8b8] to-[#989898] text-[9px] leading-none whitespace-nowrap text-[#1c1c1c]">
        Average the Responses
      </button>
    </div>
  );
}

function Legend() {
  return (
    <div className="mx-auto grid h-[38px] w-[85%] grid-cols-4 gap-x-6 bg-[#101010] pt-0.5 pr-8 pl-[5px] text-[9px]">
      {legend.map((item) => (
        <label key={item.id} className={`flex items-center ${item.text}`}>
          <span className="relative mr-1 flex size-3">
            <input
              type="checkbox"
              defaultChecked={item.checked}
              className={`peer size-3 appearance-none rounded-xs border bg-[#e4e4e4] ${
                item.focus ? "border-[#5c88b0] ring-1 ring-[#5c88b0]" : "border-[#909090]"
              }`}
            />
            <svg className="pointer-events-none absolute inset-0 hidden peer-checked:block" width="12" height="12" viewBox="0 0 12 12">
              <path d="M3 6l2.500 3L9.500 2" fill="none" stroke="#111" strokeWidth="1.600" />
            </svg>
          </span>
          <span className="flex-1">{item.label}</span>
          {item.line && (
            <svg className="mr-7" width="39" height="3" viewBox="0 0 39 3">
              <path d="M0 1.500h39" stroke={item.line} strokeWidth="1.400" />
            </svg>
          )}
          <span className="w-8 text-right whitespace-nowrap">{item.value}</span>
        </label>
      ))}
    </div>
  );
}

function GraphPanel() {
  const yTicks = [105, 100, 95, 90, 85, 80, 75, 70, 65, 60];

  return (
    <main className="flex min-w-0 flex-1 flex-col">
      <GraphToolbar />
      <div className="flex flex-1">
        <div className="relative mt-3 mb-8 w-[34px] shrink-0 text-[9px] leading-3 text-[#b8b8b8]">
          <span className="absolute -top-[15px] right-2">SPL</span>
          {yTicks.map((db) => (
            <span
              key={db}
              className="absolute right-1.5 -translate-y-1/2"
              style={{ top: `${(110 - db) * 2}%` }}
            >
              {db}
            </span>
          ))}
          <input
            aria-label="Top of SPL axis"
            defaultValue="110,00"
            className="absolute -top-1.5 right-0.5 h-3 w-[30px] border border-[#6c6cb8] bg-[#0c0c14] text-center text-[9px] text-[#9a9ae0] outline-none"
          />
        </div>
        <div className="mr-[17px] flex min-w-0 flex-1 flex-col">
          <div className="mb-px flex h-[9px] text-center text-[9px] leading-[9px] text-[#c0c0c0]">
            {bands.map((band) => (
              <div
                key={band.name}
                className={`basis-0 border-r border-[#606060] last:border-r-0 ${band.color}`}
                style={{ flexGrow: band.size }}
              >
                {band.name}
              </div>
            ))}
          </div>
          <div className="h-0.5 bg-[#8c8c8c]" />
          <Plot />
          <div className="relative h-[19px] text-[9px] leading-[19px] text-[#b8b8b8]">
            {frequencyLabels.map((f) => (
              <span
                key={f.hz}
                className={`absolute -translate-x-1/2 ${f.dim ? "text-[#6c6c6c]" : ""}`}
                style={{ left: `${(freqX(f.hz) / PLOT.w) * 100}%` }}
              >
                {f.text}
              </span>
            ))}
            <input
              aria-label="Left of frequency axis"
              defaultValue="20,17"
              className="absolute top-1 -left-[13px] h-3 w-[26px] border border-[#6c6cb8] bg-[#0c0c14] text-center text-[9px] text-[#9a9ae0] outline-none"
            />
          </div>
          <div className="-ml-[3px] flex h-[13px] border border-[#6c6c6c] bg-[#242424]">
            <ArrowButton dir="left" />
            <div className="flex-[421]" />
            <div className="flex-[781] bg-linear-to-b from-[#b4b4b4] to-[#8c8c8c]" />
            <div className="flex-[69]" />
            <ArrowButton dir="right" />
          </div>
        </div>
      </div>
      <div className="mt-1 mb-0.5 pr-[17px] pl-[31px]">
        <Legend />
      </div>
    </main>
  );
}

function StatusBar() {
  return (
    <footer className="flex h-[17px] border-t border-[#707070] text-[9px] leading-[18px] whitespace-pre text-[#c0c0c0]">
      <span className="w-[61px] border-r border-[#707070] pl-0.5">75/225MB</span>
      <span className="border-r border-[#707070] px-0.5">48 kHz</span>
      <span className="border-r border-[#707070] px-0.5">16-bit in, 16-bit out</span>
      <span className="w-[210px] border-r border-[#707070] pl-1 text-[#5050c8]">
        0000 0000{"   "}0000 0000{"   "}0000 0000{"   "}0000 0000
      </span>
      <span className="ml-1.5 border-x border-[#707070] px-0.5">Peak input before clipping 136 dB SPL</span>
      <span className="flex-1" />
      <span className="w-[10%] border-l border-[#707070]" />
    </footer>
  );
}

export default function App() {
  return (
    <div className="flex min-h-screen flex-col bg-linear-to-b from-[#414141] to-[#232323] font-['Liberation_Sans',sans-serif]">
      <MenuBar />
      <MainToolbar />
      <div className="flex flex-1">
        <Sidebar />
        <div className="mt-[55px] mb-[76px] ml-1.5 flex w-3 shrink-0 flex-col border-x border-[#606060] bg-[#222]">
          <ArrowButton dir="up" />
          <div className="flex-[98]" />
          <div className="flex-[74] bg-linear-to-r from-[#b4b4b4] to-[#8c8c8c]" />
          <div className="flex-[440]" />
          <ArrowButton dir="down" />
        </div>
        <GraphPanel />
      </div>
      <StatusBar />
    </div>
  );
}
